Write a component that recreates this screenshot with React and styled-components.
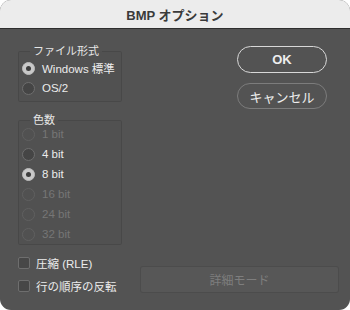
import styled, { createGlobalStyle } from "styled-components";

const GlobalStyle = createGlobalStyle`
  html, body {
    margin: 0;
    padding: 0;
    background: #ffffff;
  }
  body {
    font-family: "Liberation Sans", "Noto Sans CJK JP", sans-serif;
    -webkit-font-smoothing: antialiased;
  }
`;

const formats = [
  { id: "win", label: "Windows 標準", checked: true },
  { id: "os2", label: "OS/2" },
];

const depths = [
  { id: "1", label: "1 bit", disabled: true },
  { id: "4", label: "4 bit" },
  { id: "8", label: "8 bit", checked: true },
  { id: "16", label: "16 bit", disabled: true },
  { id: "24", label: "24 bit", disabled: true },
  { id: "32", label: "32 bit", disabled: true },
];

const App = () => {
  return (
    <>
      <GlobalStyle />
      <Window>
        <TitleBar>BMP オプション</TitleBar>
        <Body>
          <Top>
            <Groups>
              <Group $padTop="1px" $padBottom="3px">
                <Legend>ファイル形式</Legend>
                {formats.map((f) => (
                  <Row key={f.id}>
                    <Radio $checked={f.checked} />
                    <Label>{f.label}</Label>
                  </Row>
                ))}
              </Group>
              <Group $padTop="0" $padBottom="0">
                <Legend $tight>色数</Legend>
                {depths.map((d) => (
                  <Row key={d.id}>
                    <Radio $checked={d.checked} $disabled={d.disabled} />
                    <Label $disabled={d.disabled}>{d.label}</Label>
                  </Row>
                ))}
              </Group>
            </Groups>
            <Buttons>
              <PillButton $primary>OK</PillButton>
              <PillButton>キャンセル</PillButton>
            </Buttons>
          </Top>
          <Bottom>
            <Checks>
              <CheckRow>
                <CheckBox />
                <Label>圧縮 (RLE)</Label>
              </CheckRow>
              <CheckRow>
                <CheckBox />
                <Label>行の順序の反転</Label>
              </CheckRow>
            </Checks>
            <DetailButton>詳細モード</DetailButton>
          </Bottom>
        </Body>
      </Window>
    </>
  );
};

const Window = styled.div`
  width: 350px;
  height: 310px;
  display: flex;
  flex-direction: column;
  border-radius: 11px;
  overflow: hidden;
  background: #535353;
`;

const TitleBar = styled.div`
  height: 28px;
  flex: none;
  display: flex;
  align-items: center;
  justify-content: center;
  background: #ececec;
  border-bottom: 1px solid #2e2e2e;
  color: #3a3a3a;
  font-size: 13px;
  font-weight: bold;
`;

const Body = styled.div`
  flex: 1;
  display: flex;
  flex-direction: column;
  padding: 16px 11px 0 18px;
`;

const Top = styled.div`
  display: flex;
  justify-content: space-between;
`;

const Groups = styled.div`
  width: 104px;
  display: flex;
  flex-direction: column;
  gap: 12px;
`;

const Group = styled.fieldset`
  margin: 0;
  padding: ${(p) => p.$padTop} 0 ${(p) => p.$padBottom} 0;
  min-width: 0;
  border: 1px solid rgba(0, 0, 0, 0.1);
  border-radius: 2px;
  background: rgba(0, 0, 0, 0.025);
`;

const Legend = styled.legend`
  margin-left: 11px;
  margin-bottom: ${(p) => (p.$tight ? "-2px" : "0")};
  padding: 0 3px;
  color: #e6e6e6;
  font-size: 11px;
  line-height: 12px;
`;

const Row = styled.div`
  height: 20px;
  display: flex;
  align-items: center;
  gap: 7px;
  padding-left: 3px;
`;

const Radio = styled.span`
  width: 13px;
  height: 13px;
  box-sizing: border-box;
  border-radius: 50%;
  flex: none;
  position: relative;
  border: 1px solid ${(p) => (p.$disabled ? "#606060" : p.$checked ? "#bdbdbd" : "#6e6e6e")};
  background: ${(p) => (p.$checked ? "#c9c9c9" : p.$disabled ? "transparent" : "#454545")};
  &::after {
    content: "";
    display: ${(p) => (p.$checked ? "block" : "none")};
    position: absolute;
    left: 50%;
    top: 50%;
    width: 5px;
    height: 5px;
    margin: -2.5px 0 0 -2.5px;
    border-radius: 50%;
    background: #3d3d3d;
  }
`;

const Label = styled.span`
  color: ${(p) => (p.$disabled ? "#767676" : "#ececec")};
  font-size: 11.5px;
  white-space: nowrap;
`;

const Buttons = styled.div`
  width: 90px;
  margin-right: 12px;
  margin-top: 1px;
  display: flex;
  flex-direction: column;
  gap: 10px;
`;

const PillButton = styled.button`
  height: ${(p) => (p.$primary ? "27px" : "26px")};
  border-radius: 14px;
  background: transparent;
  border: 1.5px solid ${(p) => (p.$primary ? "#d8d8d8" : "#7c7c7c")};
  color: #eeeeee;
  font-family: inherit;
  font-size: 13px;
  font-weight: ${(p) => (p.$primary ? "bold" : "normal")};
  padding: 0;
`;

const Bottom = styled.div`
  display: flex;
  justify-content: space-between;
  align-items: flex-start;
  margin-top: 12px;
`;

const Checks = styled.div`
  display: flex;
  flex-direction: column;
  gap: 11px;
`;

const CheckRow = styled.div`
  height: 12px;
  display: flex;
  align-items: center;
  gap: 6px;
`;

const CheckBox = styled.span`
  width: 12px;
  height: 12px;
  box-sizing: border-box;
  border: 1px solid #6e6e6e;
  border-radius: 2px;
  background: #474747;
  flex: none;
`;

const DetailButton = styled.button`
  width: 199px;
  height: 27px;
  margin-top: 9px;
  border: 1px solid rgba(0, 0, 0, 0.12);
  border-radius: 3px;
  background: #575757;
  color: #7e7e7e;
  font-family: inherit;
  font-size: 12px;
  padding: 0;
`;

export default App;
